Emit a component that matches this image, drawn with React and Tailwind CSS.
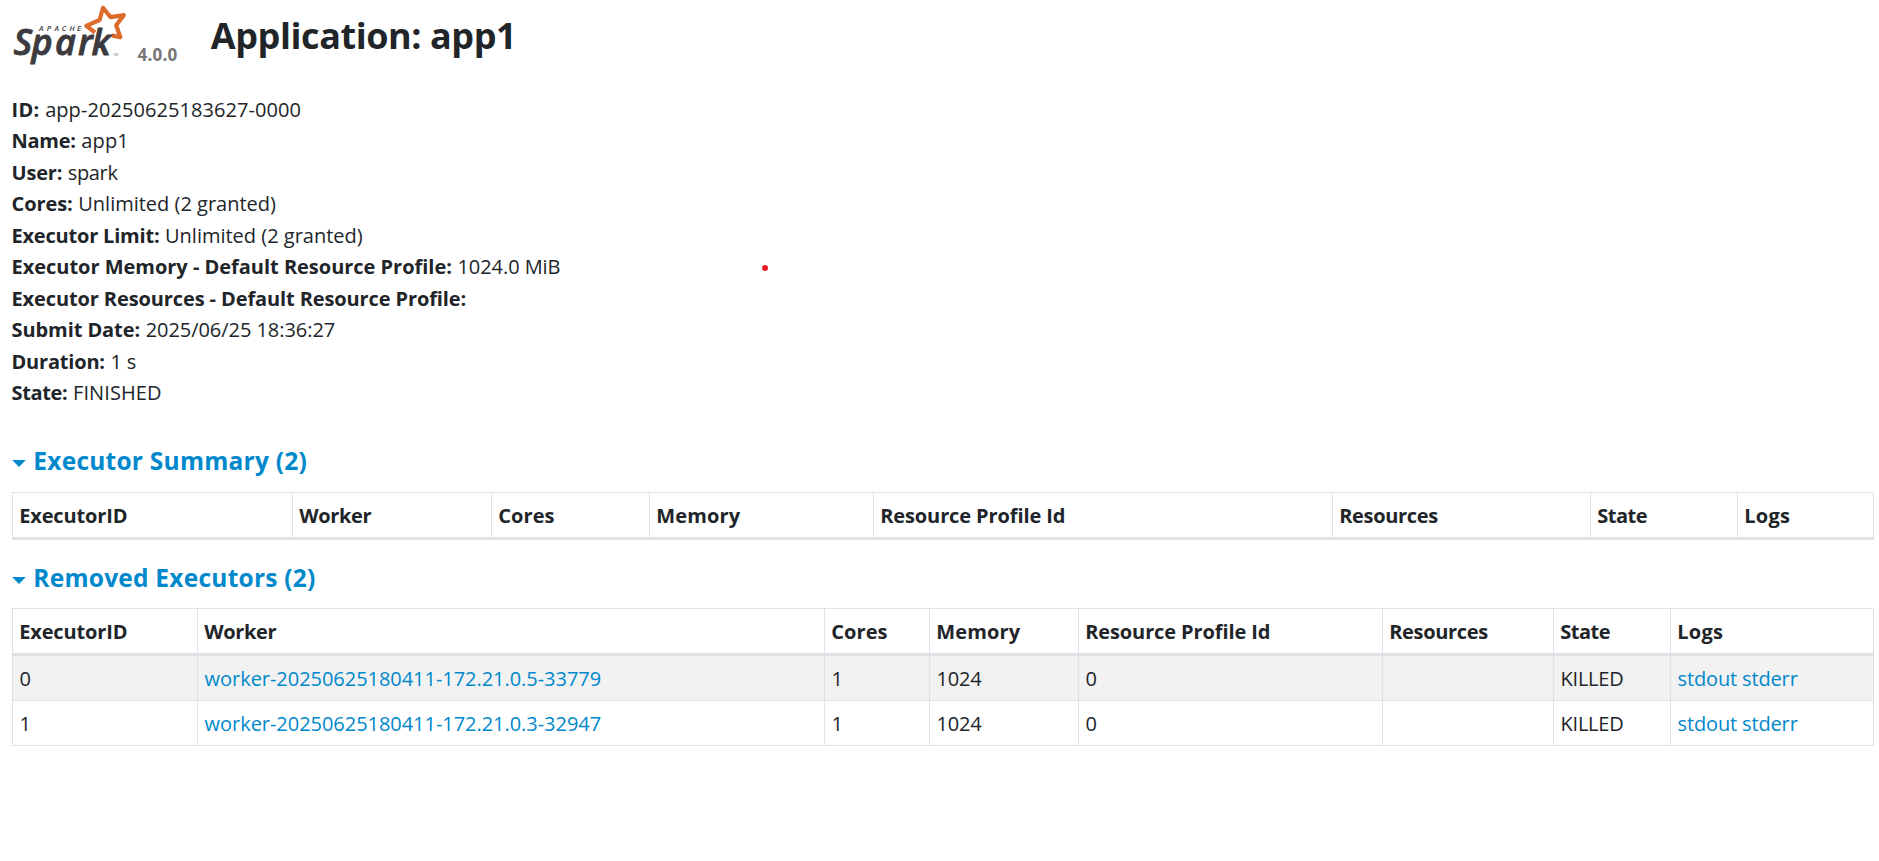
import React from 'react';

const details = [
  { label: 'ID:', value: 'app-20250625183627-0000', lc: 'tracking-[0.3px]', vc: 'tracking-[0.07px]' },
  { label: 'Name:', value: 'app1', lc: 'tracking-[-0.25px]', vc: 'tracking-[0.1px]' },
  { label: 'User:', value: 'spark', lc: 'tracking-[-0.2px]', vc: 'tracking-[-0.35px]' },
  { label: 'Cores:', value: 'Unlimited (2 granted)', lc: 'tracking-[-0.09px]', vc: 'tracking-[0px]' },
  { label: 'Executor Limit:', value: 'Unlimited (2 granted)', lc: 'tracking-[-0.2px]', vc: 'tracking-[0px]' },
  { label: 'Executor Memory - Default Resource Profile:', value: '1024.0 MiB', lc: 'tracking-[-0.02px]', vc: 'tracking-[-0.07px]' },
  { label: 'Executor Resources - Default Resource Profile:', value: '', lc: 'tracking-[-0.11px]', vc: 'tracking-[0px]' },
  { label: 'Submit Date:', value: '2025/06/25 18:36:27', lc: 'tracking-[-0.08px]', vc: 'tracking-[-0.05px]' },
  { label: 'Duration:', value: '1 s', lc: 'tracking-[-0.2px]', vc: 'tracking-[-0.2px]' },
  { label: 'State:', value: 'FINISHED', lc: 'tracking-[-0.35px]', vc: 'tracking-[0.09px]' },
];

const headers = [
  { text: 'ExecutorID', c: 'tracking-[-0.14px]' },
  { text: 'Worker', c: 'tracking-[-0.35px]' },
  { text: 'Cores', c: 'tracking-[0.1px]' },
  { text: 'Memory', c: 'tracking-[0.14px]' },
  { text: 'Resource Profile Id', c: 'tracking-[-0.11px]' },
  { text: 'Resources', c: 'tracking-[-0.33px]' },
  { text: 'State', c: 'tracking-[-0.45px]' },
  { text: 'Logs', c: 'tracking-[0.3px]' },
];

const removed = [
  { id: '0', worker: 'worker-20250625180411-172.21.0.5-33779' },
  { id: '1', worker: 'worker-20250625180411-172.21.0.3-32947' },
];

function SparkLogo() {
  return (
    <svg width="128" height="70" viewBox="0 0 128 70" className="block shrink-0" role="img" aria-label="Apache Spark">
      <path
        d="M95 32.5 L86.3 25.8 L99.6 20 L103 7.8 L110.6 17.2 L123.8 15.2 L116.2 25.3 L120.3 37.3 L111.5 35.4"
        fill="none"
        stroke="#dd6b2b"
        strokeWidth="4.2"
        strokeLinejoin="round"
      />
      <text
        x="39 46.8 54.4 61.8 69.4 77"
        y="31.2"
        fontSize="7.5"
        fontStyle="italic"
        fontWeight="600"
        fill="#3c3a3e"
        fontFamily="Open Sans, sans-serif"
      >
        APACHE
      </text>
      <text
        x="13.5 31.5 55 78 91.5"
        y="55.3"
        fontSize="36"
        fontStyle="italic"
        fontWeight="600"
        fill="#3c3a3e"
        stroke="#3c3a3e"
        strokeWidth="0.9"
        strokeLinejoin="round"
        fontFamily="Open Sans, sans-serif"
      >
        Spark
      </text>
      <text x="113" y="56" fontSize="3.5" fill="#777777" fontFamily="Open Sans, sans-serif">TM</text>
    </svg>
  );
}

function SectionTitle({ children }) {
  return (
    <h4 className="flex h-8 items-center text-[24.5px] leading-8 font-bold tracking-[0.24px] text-[#0088cc]">
      <svg width="14" height="7" viewBox="0 0 14 7" className="mt-[5px] mr-[7.3px] shrink-0">
        <path d="M0.2 0 H13.8 L7 7 Z" fill="#0088cc" />
      </svg>
      <a>{children}</a>
    </h4>
  );
}

const cell = 'h-[45px] border-l border-b border-[#dee2e6] pl-[6.6px] pt-[1.5px] last:border-r align-middle';

function ExecutorTable({ widths, rows }) {
  return (
    <table className="w-[1862px] table-fixed border-separate border-spacing-0 border-t border-[#dee2e6] text-left">
      <colgroup>
        {widths.map((w, i) => (
          <col key={i} className={w} />
        ))}
      </colgroup>
      <thead>
        <tr>
          {headers.map((h) => (
            <th
              key={h.text}
              className={`h-[47px] border-b-[3px] border-l border-[#dee2e6] pt-[1.5px] pl-[6.2px] align-middle font-bold last:border-r ${h.c}`}
            >
              {h.text}
            </th>
          ))}
        </tr>
      </thead>
      <tbody>
        {rows.map((r) => (
          <tr key={r.id} className="odd:bg-[#f2f2f2]">
            <td className={cell}>{r.id}</td>
            <td className={`${cell} tracking-[-0.04px] text-[#0088cc]`}>
              <a>{r.worker}</a>
            </td>
            <td className={cell}>1</td>
            <td className={`${cell} tracking-[-0.2px]`}>1024</td>
            <td className={cell}>0</td>
            <td className={cell}></td>
            <td className={`${cell} tracking-[-0.25px]`}>KILLED</td>
            <td className={`${cell} tracking-[-0.15px] text-[#0088cc]`}>
              <a>stdout</a> <a>stderr</a>
            </td>
          </tr>
        ))}
      </tbody>
    </table>
  );
}

const summaryWidths = ['w-[280px]', 'w-[199px]', 'w-[158px]', 'w-[224px]', 'w-[459px]', 'w-[258px]', 'w-[147px]', 'w-[137px]'];
const removedWidths = ['w-[185px]', 'w-[627px]', 'w-[105px]', 'w-[149px]', 'w-[304px]', 'w-[171px]', 'w-[117px]', 'w-[204px]'];

export default function App() {
  return (
    <div className="relative h-[861px] w-[1879px] overflow-hidden bg-white font-['Open_Sans',sans-serif] text-[20px] leading-[31.5px] text-[#212529]">
      <header className="flex h-[70px]">
        <SparkLogo />
        <span className="ml-[9.6px] pt-[43px] text-[17px] leading-6 font-bold tracking-[0.2px] text-[#777777]">4.0.0</span>
        <h3 className="ml-[33.4px] pt-[12px] text-[36px] leading-[48px] font-bold tracking-[-0.43px]">Application: app1</h3>
      </header>

      <ul className="mt-[23.5px] pl-[11.5px]">
        {details.map((d) => (
          <li key={d.label} className="h-[31.5px]">
            <strong className={`font-bold ${d.lc}`}>{d.label}</strong> <span className={`ml-[0.4px] ${d.vc}`}>{d.value}</span>
          </li>
        ))}
      </ul>

      <section className="mt-[36px] pl-3">
        <SectionTitle>Executor Summary (2)</SectionTitle>
        <div className="mt-[15.5px]">
          <ExecutorTable widths={summaryWidths} rows={[]} />
        </div>
      </section>

      <section className="mt-[22px] pl-3">
        <SectionTitle>Removed Executors (2)</SectionTitle>
        <div className="mt-[14px]">
          <ExecutorTable widths={removedWidths} rows={removed} />
        </div>
      </section>

      <span className="absolute top-[265px] left-[762px] size-[6px] rounded-full bg-[#e81c24]" />
    </div>
  );
}
